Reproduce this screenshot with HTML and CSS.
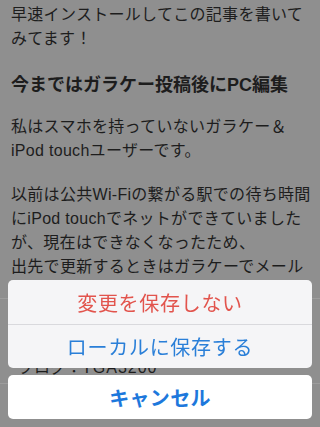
FILE: index.html
```html
<!DOCTYPE html>
<html lang="ja">
<head>
<meta charset="utf-8">
<link rel="stylesheet" href="styles.css">
</head>
<body>
<main class="page">
  <p class="para p1">早速インストールしてこの記事を書いてみてます！</p>
  <h2 class="heading">今まではガラケー投稿後にPC編集</h2>
  <p class="para p2">私はスマホを持っていないガラケー＆iPod touchユーザーです。</p>
  <p class="para p3">以前は公共Wi-Fiの繋がる駅での待ち時間<br>にiPod touchでネットができていました<br>が、現在はできなくなったため、<br>出先で更新するときはガラケーでメール</p>
  <div class="meta">
    <div class="meta-row">ブログ：<span class="meta-val">TGA3200</span></div>
  </div>
</main>
<div class="sheet">
  <div class="group">
    <div class="action danger">変更を保存しない</div>
    <div class="action normal">ローカルに保存する</div>
  </div>
  <div class="cancel">キャンセル</div>
</div>
</body>
</html>
```
FILE: styles.css
```css
html, body {
  margin: 0;
  padding: 0;
  background: #8f8f8f;
}
body {
  width: 320px;
  height: 427px;
  overflow: hidden;
  font-family: "Liberation Sans", "Noto Sans CJK JP", sans-serif;
  color: #1d1d1d;
}
.page {
  padding: 3px 11px 0 11px;
}
.para {
  margin: 0;
  font-size: 16px;
  line-height: 24px;
  letter-spacing: 0.3px;
  white-space: nowrap;
}
.p1, .p2 {
  white-space: normal;
}
.heading {
  margin: 22px 0 18px 0;
  font-size: 18px;
  line-height: 24px;
  font-weight: 700;
  letter-spacing: 0;
}
.p3 {
  margin-top: 20px;
}
.meta {
  margin: 19px -11px 0 -11px;
  border-top: 1px solid #9d9d9d;
  border-bottom: 1px solid #9d9d9d;
  height: 84px;
  display: flex;
  flex-direction: column;
  justify-content: flex-end;
}
.meta-row {
  padding: 0 0 3px 18px;
  font-size: 16px;
  line-height: 24px;
  color: #1d1d1d;
}
.meta-val {
  letter-spacing: 1px;
}
.sheet {
  position: fixed;
  left: 8px;
  right: 8px;
  top: 280px;
  display: flex;
  flex-direction: column;
  gap: 7px;
}
.group {
  background: #f5f5f7;
  border-radius: 5px;
  overflow: hidden;
}
.action {
  height: 44px;
  display: flex;
  align-items: center;
  justify-content: center;
  font-family: "Noto Sans CJK JP", sans-serif;
  font-size: 20px;
  letter-spacing: 0.7px;
}
.action + .action {
  border-top: 1px solid #d9d9dd;
  height: 43px;
}
.danger {
  color: #e2544d;
}
.normal {
  color: #2a7fd8;
}
.cancel {
  height: 44px;
  background: #ffffff;
  border-radius: 5px;
  display: flex;
  align-items: center;
  justify-content: center;
  font-family: "Noto Sans CJK JP", sans-serif;
  font-size: 20px;
  font-weight: 700;
  letter-spacing: 0.3px;
  color: #1d78dc;
}
```
